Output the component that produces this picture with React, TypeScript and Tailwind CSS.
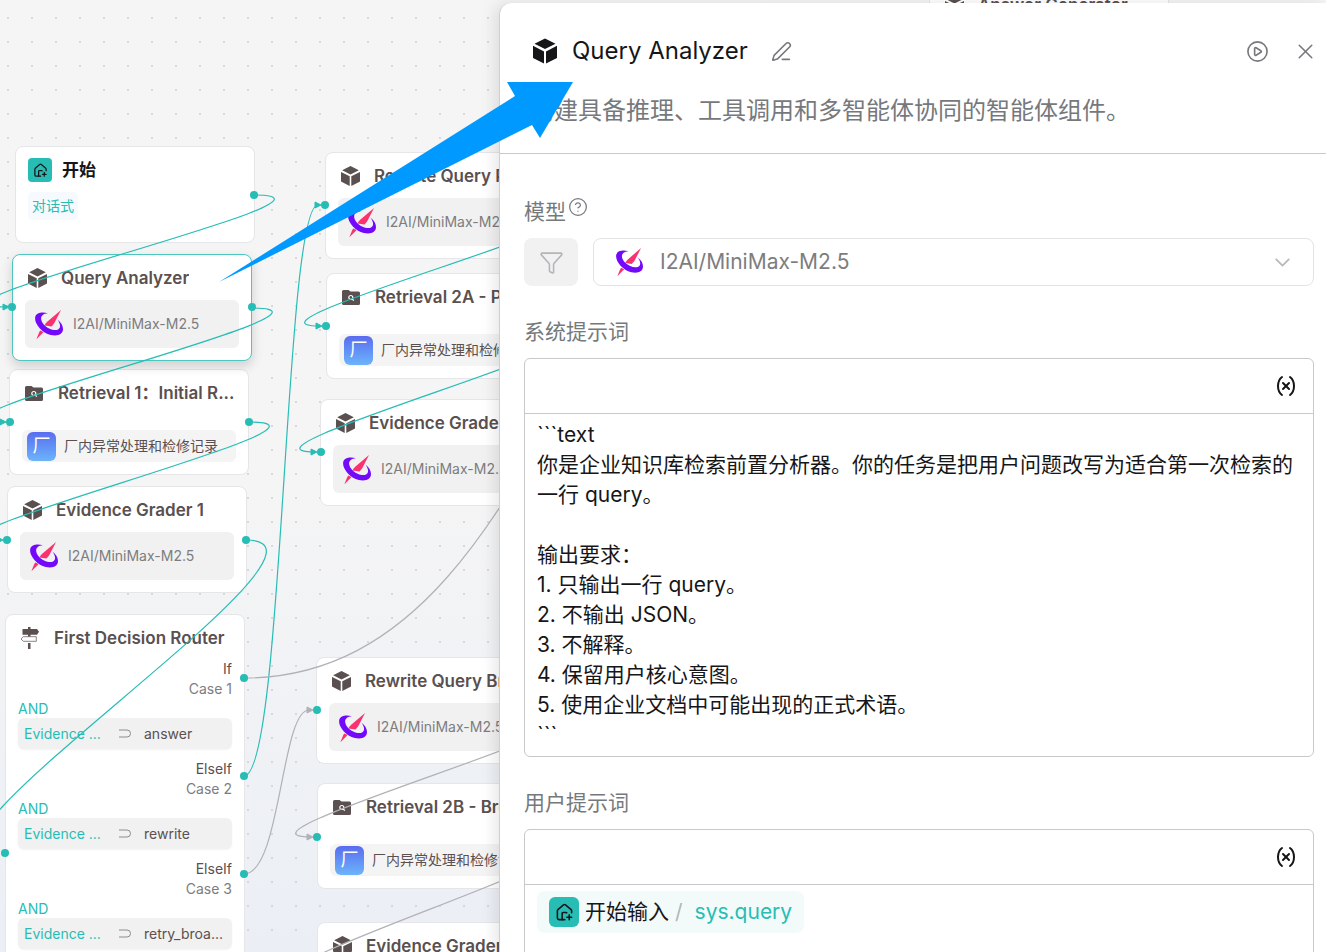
import type { ReactNode } from "react";
import {
  ChevronDown,
  CircleHelp,
  CirclePlay,
  Funnel,
  HousePlus,
  PenLine,
  Variable,
  X,
} from "lucide-react";
import clsx from "clsx";

const TEAL = "#27bdb5";
const GRAY = "#b1b1b7";

const systemPrompt = `\`\`\`text
你是企业知识库检索前置分析器。你的任务是把用户问题改写为适合第一次检索的一行 query。

输出要求：
1. 只输出一行 query。
2. 不输出 JSON。
3. 不解释。
4. 保留用户核心意图。
5. 使用企业文档中可能出现的正式术语。
\`\`\``;

const routerCases = [
  { branch: "If", name: "Case 1", value: "answer" },
  { branch: "ElseIf", name: "Case 2", value: "rewrite" },
  { branch: "ElseIf", name: "Case 3", value: "retry_broa..." },
];

// edges that loop back to the left use wide control points
const edges = [
  { d: "M254 195 C378 195 -112 307 5 307", color: TEAL },
  { d: "M252 308 C376 308 -114 422 2 422", color: TEAL },
  { d: "M249 422 C373 422 -116 540 -1 540", color: TEAL },
  { d: "M246 540 C370 540 -118 853 -3 853", color: TEAL },
  { d: "M244 776 C284 776 284 205 318 205", color: TEAL },
  { d: "M565 205 C680 205 216 326 320 326", color: TEAL },
  { d: "M566 326 C681 326 211 452 315 452", color: TEAL },
  { d: "M244 678 C586 678 586 34 929 34", color: GRAY },
  { d: "M244 874 C281 874 281 710 309 710", color: GRAY },
  { d: "M557 710 C672 710 207 837 311 837", color: GRAY },
  { d: "M557 837 C672 837 207 975 311 975", color: GRAY },
];

const arrows = [
  { x: 9, y: 307, color: TEAL },
  { x: 6, y: 422, color: TEAL },
  { x: 3, y: 540, color: TEAL },
  { x: 321, y: 205, color: TEAL },
  { x: 322, y: 326, color: TEAL },
  { x: 317, y: 452, color: TEAL },
  { x: 313, y: 710, color: GRAY },
  { x: 313, y: 837, color: GRAY },
];

const handles = [
  [254, 195],
  [12, 307],
  [252, 307],
  [10, 422],
  [249, 422],
  [7, 540],
  [246, 540],
  [5, 853],
  [244, 678],
  [244, 776],
  [244, 874],
  [325, 205],
  [326, 326],
  [321, 452],
  [317, 710],
  [317, 837],
];

function CubeIcon({ className }: { className?: string }) {
  return (
    <svg viewBox="0 0 24 25" fill="currentColor" className={className}>
      <path d="M12 0 22.5 5.3 12 10.6 1.5 5.3Z" />
      <path d="M0 7.3 11 12.9V25L0 19.4Z" />
      <path d="M24 7.3 13 12.9V25L24 19.4Z" />
    </svg>
  );
}

function FolderSearchIcon() {
  return (
    <svg viewBox="0 0 18 15" className="h-[15px] w-[18px]">
      <path
        fill="currentColor"
        d="M1.5 0H6.5L8.5 1.500H16.500Q18 1.500 18 3V13.500Q18 15 16.500 15H1.500Q0 15 0 13.500V1.500Q0 0 1.500 0Z"
      />
      <circle cx="8.800" cy="7.500" r="2" fill="none" stroke="white" strokeWidth="1.200" />
      <path d="M10.200 9 11.800 10.600" stroke="white" strokeWidth="1.200" />
    </svg>
  );
}

function SignpostIcon() {
  return (
    <svg viewBox="0 0 20 22" className="h-[22px] w-5">
      <path fill="currentColor" d="M8 0H10.500V2H17L19 4.700 17 7.700H2.500V2H8Z" />
      <path
        d="M3.300 9.700H16.300V14.300H3.300L1 12Z"
        fill="white"
        stroke="currentColor"
        strokeOpacity=".7"
      />
      <path fill="currentColor" d="M8 16H10.500V22H8ZM8 7H10.500V9.500H8Z" />
    </svg>
  );
}

function ModelLogo({ className }: { className?: string }) {
  return (
    <svg viewBox="0 0 85 88" className={className}>
      <path
        fill="#7209fa"
        d="M39 10C24 6 5 7 1 20C-4 39 19 68 48 76C70 81 85 73 85 58C85 47 79 38 68 29C78 43 79 54 70 59C59 64 38 57 26 43C13 27 17 12 39 10Z"
      />
      <path fill="#fa3370" d="M79 0 60 37C57 43 54 45 50 50L29 47C31 43 33 40 37 36Z" />
      <path fill="#fa3370" d="M4 89 13 67 16 62 26 67 22 71Z" />
    </svg>
  );
}

function StartBadge({ className, size }: { className: string; size: number }) {
  return (
    <span
      className={clsx(
        "flex shrink-0 items-center justify-center bg-[#27bdb5] text-[#161618]",
        className
      )}>
      <HousePlus size={size} strokeWidth={2} />
    </span>
  );
}

type NodeProps = {
  title: string;
  position: string;
  icon: ReactNode;
  children?: ReactNode;
  selected?: boolean;
};

function FlowNode({ title, position, icon, children, selected }: NodeProps) {
  return (
    <article
      className={clsx(
        "absolute w-60 rounded-lg border bg-white px-3 pt-[11px] pb-3 text-[#5a504f]",
        selected
          ? "z-10 border-[#4cc7c0] shadow-[0_5px_12px_rgba(0,0,0,0.16)]"
          : "border-[#e6e6e8]",
        position
      )}>
      <header className="flex h-6 items-center gap-3">
        <span className="flex w-6 shrink-0 justify-center">{icon}</span>
        <h3 className="truncate text-[17px] leading-6 font-semibold">{title}</h3>
      </header>
      {children}
    </article>
  );
}

function ModelNode(props: { title: string; position: string; selected?: boolean }) {
  return (
    <FlowNode {...props} icon={<CubeIcon className="h-5 w-[19px]" />}>
      <div className="mt-2.5 flex h-12 items-center gap-2.5 rounded-md bg-[#f1f1f1] pl-2.5">
        <ModelLogo className="h-[29px] w-7" />
        <span className="text-sm text-[#7d7d80]">I2AI/MiniMax-M2.5</span>
      </div>
    </FlowNode>
  );
}

function RetrievalNode(props: { title: string; position: string }) {
  return (
    <FlowNode {...props} icon={<FolderSearchIcon />}>
      <div className="mt-[25px] flex h-8 items-center gap-2 rounded-md bg-[#f4f4f4] pl-[5px]">
        <span className="flex size-[29px] items-center justify-center rounded-md bg-linear-to-b from-[#5a6bee] to-[#6cb4fb] text-lg text-white">
          厂
        </span>
        <span className="text-sm">厂内异常处理和检修记录</span>
      </div>
    </FlowNode>
  );
}

function RouterNode() {
  return (
    <FlowNode
      title="First Decision Router"
      position="left-[5px] top-[614px]"
      icon={<SignpostIcon />}>
      <div className="mt-[9px] flex flex-col gap-2.5 text-sm">
        {routerCases.map((item) => (
          <section key={item.name}>
            <p className="text-right leading-5">{item.branch}</p>
            <p className="text-right leading-5 text-[#7d7d80]">{item.name}</p>
            <p className="leading-[19px] text-[#27bdb5]">AND</p>
            <div className="flex h-[31px] items-center rounded-md bg-[#f1f1f1] px-1.5 shadow-xs">
              <span className="w-[95px] text-[#27bdb5]">Evidence ...</span>
              <svg viewBox="0 0 12 9" className="mr-[13px] h-[9px] w-3" fill="none" stroke="#8c8c8e">
                <path d="M0 1H8Q11.500 1 11.500 4.500T8 8H0" />
              </svg>
              <span>{item.value}</span>
            </div>
          </section>
        ))}
      </div>
    </FlowNode>
  );
}

function Canvas() {
  return (
    <div className="absolute inset-0 z-0 overflow-hidden bg-linear-to-b from-[#f5f5f5] from-50% to-[#ebeff5]">
      <div className="absolute inset-0 bg-[radial-gradient(#d8d8db_1px,transparent_1px)] bg-[size:24px_24px] bg-[position:-4px_6px]" />

      <article className="absolute top-[146px] left-[15px] h-[97px] w-60 rounded-lg border border-[#e6e6e8] bg-white px-3 pt-[11px]">
        <header className="flex h-6 items-center gap-2.5">
          <StartBadge className="size-6 rounded" size={15} />
          <h3 className="text-[17px] leading-6 font-semibold text-[#161618]">开始</h3>
        </header>
        <span className="mt-2.5 inline-block rounded bg-[#f6faff] px-1 text-sm leading-7 text-[#27bdb5]">
          对话式
        </span>
      </article>

      <ModelNode title="Query Analyzer" position="left-[12px] top-[254px]" selected />
      <RetrievalNode title="Retrieval 1：Initial R..." position="left-[9px] top-[369px]" />
      <ModelNode title="Evidence Grader 1" position="left-[7px] top-[486px]" />
      <RouterNode />

      <ModelNode title="Rewrite Query Precise" position="left-[325px] top-[152px]" />
      <RetrievalNode title="Retrieval 2A - Precise" position="left-[326px] top-[273px]" />
      <ModelNode title="Evidence Grader 2A" position="left-[320px] top-[399px]" />
      <ModelNode title="Rewrite Query Broad" position="left-[316px] top-[657px]" />
      <RetrievalNode title="Retrieval 2B - Broad" position="left-[317px] top-[783px]" />
      <ModelNode title="Evidence Grader 2B" position="left-[317px] top-[922px]" />
      <ModelNode title="Answer Generator" position="left-[929px] -top-[19px]" />

      <svg className="absolute inset-0 z-20 size-full" fill="none">
        {edges.map((edge) => (
          <path key={edge.d} d={edge.d} stroke={edge.color} strokeWidth="1.2" />
        ))}
        {arrows.map(({ x, y, color }) => (
          <path key={`${x}-${y}`} d={`M${x} ${y}l-6 -3v6z`} fill={color} stroke={color} />
        ))}
        {handles.map(([x, y]) => (
          <circle key={`${x}-${y}`} cx={x} cy={y} r="4" fill={TEAL} />
        ))}
      </svg>
    </div>
  );
}

function EditorBox({ children }: { children: ReactNode }) {
  return (
    <div className="overflow-hidden rounded-md border border-[#c9c9cb]">
      <div className="flex h-[55px] items-center justify-end border-b border-[#c9c9cb] pr-[15px]">
        <button type="button" aria-label="插入变量">
          <Variable size={24} strokeWidth={2} />
        </button>
      </div>
      {children}
    </div>
  );
}

function SettingsPanel() {
  return (
    <aside className="relative z-10 mt-[3px] ml-[499px] min-h-[949px] flex-1 rounded-tl-xl border-l border-[#cfcfd1] bg-white shadow-[-4px_0_16px_rgba(0,0,0,0.1)]">
      <header className="border-b border-[#c9c9cb] pt-7 pr-2 pb-6 pl-6 text-[#76797c]">
        <div className="flex items-center">
          <CubeIcon className="ml-[9px] h-[26px] w-6 text-[#161618]" />
          <h2 className="ml-[15px] text-2xl leading-10 text-[#161618]">Query Analyzer</h2>
          <button type="button" className="ml-[23px]" aria-label="重命名">
            <PenLine size={21} strokeWidth={1.8} />
          </button>
          <button type="button" className="mr-6 ml-auto" aria-label="运行">
            <CirclePlay size={23} strokeWidth={1.7} />
          </button>
          <button type="button" aria-label="关闭">
            <X size={25} strokeWidth={1.5} />
          </button>
        </div>
        <p className="mt-[22px] pl-1.5 text-2xl leading-9">
          构建具备推理、工具调用和多智能体协同的智能体组件。
        </p>
      </header>

      <div className="flex flex-col gap-[30px] pt-[42px] pr-3 pl-6 text-[21px] text-[#161618]">
        <div>
          <div className="flex gap-0.5 leading-8 text-[#76797c]">
            <label htmlFor="model">模型</label>
            <CircleHelp size={20} strokeWidth={1.5} className="mt-px" />
          </div>
          <div className="mt-2.5 flex gap-[15px]">
            <button
              type="button"
              aria-label="筛选模型"
              className="flex h-12 w-[54px] items-center justify-center rounded-lg bg-[#f1f1f1] text-[#b3b5b8]">
              <Funnel size={25} strokeWidth={1.5} />
            </button>
            <div className="flex h-12 flex-1 items-center rounded-lg border border-[#e3e3e5] pr-[18px] pl-[22px]">
              <ModelLogo className="h-7 w-[27px]" />
              <select
                id="model"
                className="ml-[17px] flex-1 appearance-none bg-transparent text-[#7d7d80] outline-none">
                <option>I2AI/MiniMax-M2.5</option>
              </select>
              <ChevronDown size={25} strokeWidth={1.8} className="text-[#b9babc]" />
            </div>
          </div>
        </div>

        <div>
          <label htmlFor="system-prompt" className="block pb-2.5 leading-8 text-[#76797c]">
            系统提示词
          </label>
          <EditorBox>
            <textarea
              id="system-prompt"
              rows={11}
              defaultValue={systemPrompt}
              className="block w-full resize-none overflow-hidden px-3 pt-1.5 pb-1.5 leading-[30px] outline-none"
            />
          </EditorBox>
        </div>

        <div>
          <h3 className="pb-2.5 leading-8 text-[#76797c]">用户提示词</h3>
          <EditorBox>
            <div className="h-40 px-3 pt-1.5">
              <span className="inline-flex h-[42px] items-center rounded-lg bg-[#f3fbfa] px-3">
                <StartBadge className="mr-1.5 size-[30px] rounded-md" size={19} />
                开始输入
                <span className="mr-3 ml-1.5 text-[#b3b5b8]">/</span>
                <span className="text-[#27bdb5]">sys.query</span>
              </span>
            </div>
          </EditorBox>
        </div>
      </div>
    </aside>
  );
}

export default function App() {
  return (
    <main className="relative flex h-screen overflow-hidden font-['Inter','Noto_Sans_CJK_SC',sans-serif]">
      <Canvas />
      <SettingsPanel />

      {/* pointer from the selected node to its settings */}
      <svg className="pointer-events-none absolute inset-0 z-30 size-full">
        <polygon
          points="219,282 515,96 507,82 573,82 540,138 532,125"
          fill="#0099ff"
        />
      </svg>
    </main>
  );
}
